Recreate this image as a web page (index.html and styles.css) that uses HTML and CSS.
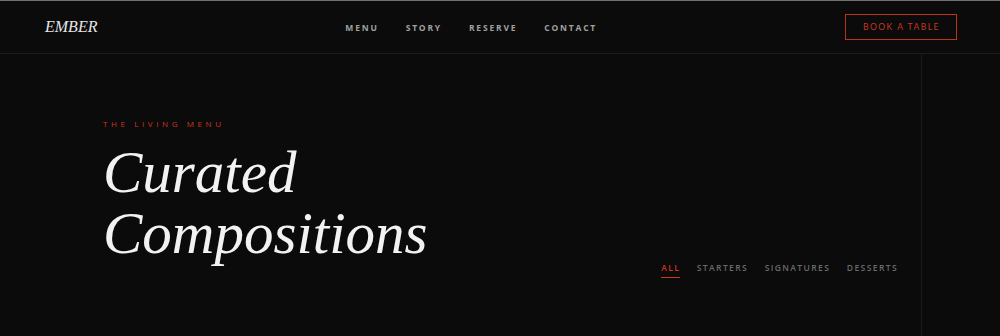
FILE: index.html
```html
<!DOCTYPE html>
<html lang="en">

<head>
    <meta charset="UTF-8">
    <meta name="viewport" content="width=device-width, initial-scale=1.0">
    <title>Ember</title>

    <link rel="stylesheet" href="styles.css">
</head>

<body>
    <header id="topo">
        <div class="logo">EMBER</div>
        <nav class="nav">
            <a href="#">Menu</a>
            <a href="#">Story</a>
            <a href="#">Reserve</a>
            <a href="#">Contact</a>
        </nav>
        <a class="btn-reserva" href="#">Book a Table</a>
    </header>

    <main id="conteudo">
        <div class="coluna">
            <section class="menu-intro">
                <div class="titulo">
                    <p class="eyebrow">The Living Menu</p>
                    <h1>Curated<br>Compositions</h1>
                </div>
                <div class="filtros">
                    <button class="filtro ativo">All</button>
                    <button class="filtro">Starters</button>
                    <button class="filtro">Signatures</button>
                    <button class="filtro">Desserts</button>
                </div>
            </section>
        </div>
        <aside class="lateral"></aside>
    </main>
</body>

</html>
```

FILE: styles.css
```css
body {
    margin: 0;
    background-color: #0b0b0b;
    border-top: 1px solid #707070;
    font-family: "Open Sans", "Liberation Sans", sans-serif;
    height: 335px;
    overflow: hidden;
    display: flex;
    flex-direction: column;
}

#topo {
    height: 52px;
    flex-shrink: 0;
    border-bottom: 1px solid #1c1c1c;
    display: flex;
    justify-content: space-between;
    align-items: center;
    padding: 0 43px 0 45px;
}

.logo {
    font-family: "Liberation Serif", serif;
    font-style: italic;
    font-size: 16px;
    color: #e6e6e6;
}

.nav {
    display: flex;
    gap: 27px;
}

.nav a {
    color: #a0a0a0;
    text-decoration: none;
    text-transform: uppercase;
    font-size: 8.5px;
    font-weight: 700;
    letter-spacing: 1.8px;
}

.btn-reserva {
    border: 1px solid #c0301c;
    color: #c8361f;
    text-decoration: none;
    text-transform: uppercase;
    font-family: "Lato", sans-serif;
    font-size: 8.5px;
    letter-spacing: 1.5px;
    padding: 7px 16px 7px 17px;
}

#conteudo {
    flex: 1;
    display: grid;
    grid-template-columns: 1fr 78px;
}

.coluna {
    border-right: 1px solid #1a1a1a;
}

.menu-intro {
    padding: 64px 23px 0 103px;
    display: flex;
    justify-content: space-between;
    align-items: flex-end;
}

.eyebrow {
    margin: 0 0 13px;
    color: #d0341f;
    text-transform: uppercase;
    font-size: 8px;
    letter-spacing: 3.6px;
}

h1 {
    margin: 0;
    font-family: "Liberation Serif", serif;
    font-style: italic;
    font-weight: 400;
    font-size: 59px;
    line-height: 61px;
    color: #f2f2f2;
}

.filtros {
    display: flex;
    gap: 16.5px;
    margin-bottom: -14px;
}

.filtro {
    background: none;
    border: none;
    border-bottom: 1px solid transparent;
    padding: 0 0 4px;
    color: #6a6a6a;
    text-transform: uppercase;
    font-family: "Open Sans", sans-serif;
    font-size: 8.5px;
    font-weight: 600;
    letter-spacing: 1.4px;
    cursor: pointer;
}

.filtro.ativo {
    color: #d0341f;
    border-bottom-color: #d0341f;
}
```
